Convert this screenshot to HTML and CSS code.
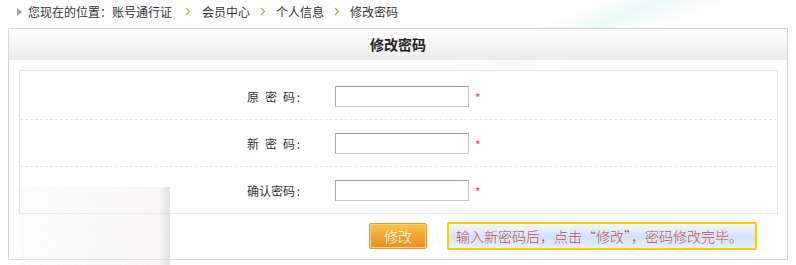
FILE: index.html
```html
<!DOCTYPE html>
<html lang="zh-CN">
<head>
<meta charset="utf-8">
<title>修改密码</title>
<link rel="stylesheet" href="styles.css">
</head>
<body>
<div class="page">
  <div class="crumbs">
    <span class="crumb-icon"></span>
    <span class="crumb-label">您现在的位置：</span>
    <span class="crumb">账号通行证</span>
    <svg class="sep first" width="6" height="9" viewBox="0 0 6 9"><polyline points="1,1 4.5,4.5 1,8" fill="none" stroke="#e39b3a" stroke-width="1.3"/></svg>
    <span class="crumb">会员中心</span>
    <svg class="sep" width="6" height="9" viewBox="0 0 6 9"><polyline points="1,1 4.5,4.5 1,8" fill="none" stroke="#e39b3a" stroke-width="1.3"/></svg>
    <span class="crumb">个人信息</span>
    <svg class="sep" width="6" height="9" viewBox="0 0 6 9"><polyline points="1,1 4.5,4.5 1,8" fill="none" stroke="#e39b3a" stroke-width="1.3"/></svg>
    <span class="crumb">修改密码</span>
  </div>

  <div class="panel">
    <div class="panel-head">修改密码</div>
    <div class="panel-body">
      <div class="form">
        <div class="row">
          <label class="label">原&ensp;密&ensp;码<span class="colon">:</span></label>
          <input class="field" type="password">
          <span class="req">*</span>
        </div>
        <div class="row">
          <label class="label">新&ensp;密&ensp;码<span class="colon">:</span></label>
          <input class="field" type="password">
          <span class="req">*</span>
        </div>
        <div class="row last">
          <label class="label">确认密码<span class="colon">:</span></label>
          <input class="field" type="password">
          <span class="req">*</span>
        </div>
      </div>
      <div class="actions">
        <button class="btn" type="button">修改</button>
        <div class="tip">输入新密码后，点击“修改”，密码修改完毕。</div>
      </div>
    </div>
  </div>
  <div class="shade"></div>
</div>
</body>
</html>
```

FILE: styles.css
```css
* { box-sizing: border-box; }

html, body {
  margin: 0;
  padding: 0;
}

body {
  width: 796px;
  height: 265px;
  overflow: hidden;
  font-family: "Noto Sans CJK SC", "Noto Sans", sans-serif;
  font-size: 12px;
  color: #333;
  background:
    linear-gradient(158deg, rgba(255,255,255,0) 62%, rgba(214,240,236,0.45) 68%, rgba(255,255,255,0) 76%) no-repeat 0 0 / 796px 70px,
    #fff;
}

.page {
  position: relative;
  height: 265px;
}

.crumbs {
  height: 28px;
  display: flex;
  align-items: center;
  padding: 0 0 5px 17px;
  color: #333;
  font-size: 12px;
  line-height: 14px;
}

.crumb-icon {
  width: 0;
  height: 0;
  border-left: 5px solid #a0a0a0;
  border-top: 4px solid transparent;
  border-bottom: 4px solid transparent;
  margin-right: 6px;
}

.sep {
  margin: 0 10px;
  display: block;
}

.sep.first { margin-left: 13px; margin-right: 11px; }

.panel {
  margin-left: 8px;
  width: 780px;
  border: 1px solid #d6d6d6;
  background: rgba(255,255,255,0.6);
}

.panel-head {
  height: 31px;
  line-height: 31px;
  text-align: center;
  font-size: 14px;
  font-weight: bold;
  color: #222;
  background: linear-gradient(#ffffff, #ebebeb);
}

.panel-body {
  padding: 10px 9px 9px 10px;
}

.form {
  border: 1px solid #e8e8e8;
  padding-top: 2px;
}

.row {
  height: 47px;
  display: flex;
  align-items: center;
  border-bottom: 1px dashed #e6e6e6;
}

.row.last {
  height: 46px;
  border-bottom: none;
}

.label {
  width: 282px;
  text-align: right;
  font-size: 12px;
  color: #333;
  margin-right: 33px;
  white-space: nowrap;
}

.colon {
  display: inline-block;
  width: 7px;
  text-align: center;
}

.field {
  width: 134px;
  height: 21px;
  margin: 0;
  padding: 0 3px;
  border: 1px solid #c4c4c4;
  border-top-color: #9a9a9a;
  border-left-color: #a8a8a8;
  background: #fff;
  font-size: 12px;
}

.req {
  margin-left: 6px;
  color: #f0306a;
  font-size: 12px;
  line-height: 1;
  padding-top: 3px;
}

.actions {
  display: flex;
  align-items: center;
  padding: 8px 0 0 350px;
}

.btn {
  width: 58px;
  height: 26px;
  margin: 0 20px 0 0;
  padding: 0;
  border: 1px solid #d49a4a;
  border-radius: 2px;
  box-shadow: inset 0 0 0 1px #fbd27a;
  background: linear-gradient(#fcc445, #eea22f 55%, #e78f24);
  color: #fff;
  font-family: "Noto Sans CJK SC", sans-serif;
  font-size: 14px;
  font-weight: 300;
  line-height: 22px;
}

.tip {
  width: 310px;
  height: 28px;
  border: 2px solid #ffcc00;
  border-radius: 2px;
  background: linear-gradient(#f2f7fe, #d2e3f8 55%, #e6effb);
  color: #c4503f;
  font-size: 14px;
  font-weight: 300;
  line-height: 24px;
  padding-left: 7px;
  white-space: nowrap;
}

.shade {
  position: absolute;
  left: 20px;
  top: 187px;
  width: 150px;
  height: 78px;
  background:
    linear-gradient(90deg, rgba(246,245,242,0.25), rgba(240,238,234,0.45) 93%, rgba(222,219,214,0.7) 98%, rgba(210,206,200,0.55)),
    repeating-linear-gradient(-45deg, rgba(255,255,255,0) 0 3px, rgba(228,225,220,0.15) 3px 4px);
  pointer-events: none;
}
```
